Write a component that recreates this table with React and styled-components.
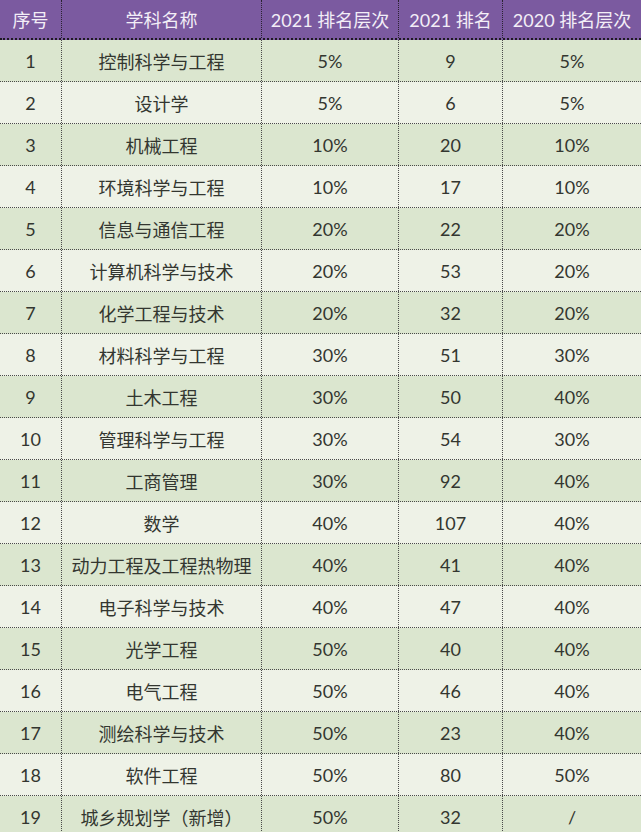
import React from "react";
import styled, { createGlobalStyle } from "styled-components";

const Global = createGlobalStyle`
  body {
    margin: 0;
    background: #eef2e7;
    font-family: Lato, "Noto Sans CJK SC", sans-serif;
  }
`;

const rows = [
  ["1", "控制科学与工程", "5%", "9", "5%"],
  ["2", "设计学", "5%", "6", "5%"],
  ["3", "机械工程", "10%", "20", "10%"],
  ["4", "环境科学与工程", "10%", "17", "10%"],
  ["5", "信息与通信工程", "20%", "22", "20%"],
  ["6", "计算机科学与技术", "20%", "53", "20%"],
  ["7", "化学工程与技术", "20%", "32", "20%"],
  ["8", "材料科学与工程", "30%", "51", "30%"],
  ["9", "土木工程", "30%", "50", "40%"],
  ["10", "管理科学与工程", "30%", "54", "30%"],
  ["11", "工商管理", "30%", "92", "40%"],
  ["12", "数学", "40%", "107", "40%"],
  ["13", "动力工程及工程热物理", "40%", "41", "40%"],
  ["14", "电子科学与技术", "40%", "47", "40%"],
  ["15", "光学工程", "50%", "40", "40%"],
  ["16", "电气工程", "50%", "46", "40%"],
  ["17", "测绘科学与技术", "50%", "23", "40%"],
  ["18", "软件工程", "50%", "80", "50%"],
  ["19", "城乡规划学（新增）", "50%", "32", "/"],
];

const cols = "61px 200px 137px 104px 139px";

const Table = styled.div`
  width: 641px;
  display: flex;
  flex-direction: column;
`;

const HeadRow = styled.div`
  display: grid;
  grid-template-columns: ${cols};
  height: 38px;
  background: #7b5aa0;
  border-bottom: 2px dotted #1e1a22;
`;

const HeadCell = styled.div`
  display: flex;
  align-items: center;
  justify-content: center;
  color: #f3eef7;
  font-size: 18px;
  white-space: nowrap;
  border-left: ${(p) => (p.$first ? "none" : "1px dotted #2a2230")};
`;

const Row = styled.div`
  display: grid;
  grid-template-columns: ${cols};
  height: 41px;
  background: ${(p) => (p.$alt ? "#dbe6cf" : "#eef2e7")};
  border-bottom: 1px dotted #4a4a4a;
`;

const Cell = styled.div`
  display: flex;
  align-items: center;
  justify-content: center;
  color: #333630;
  font-size: 18px;
  white-space: nowrap;
  border-left: ${(p) => (p.$first ? "none" : "1px dotted #4a4a4a")};
`;

export default function App() {
  return (
    <>
      <Global />
      <Table>
        <HeadRow>
          {["序号", "学科名称", "2021 排名层次", "2021 排名", "2020 排名层次"].map((h, i) => (
            <HeadCell key={h} $first={i === 0}>{h}</HeadCell>
          ))}
        </HeadRow>
        {rows.map((r, idx) => (
          <Row key={r[0]} $alt={idx % 2 === 0}>
            {r.map((c, i) => (
              <Cell key={i} $first={i === 0}>{c}</Cell>
            ))}
          </Row>
        ))}
      </Table>
    </>
  );
}
